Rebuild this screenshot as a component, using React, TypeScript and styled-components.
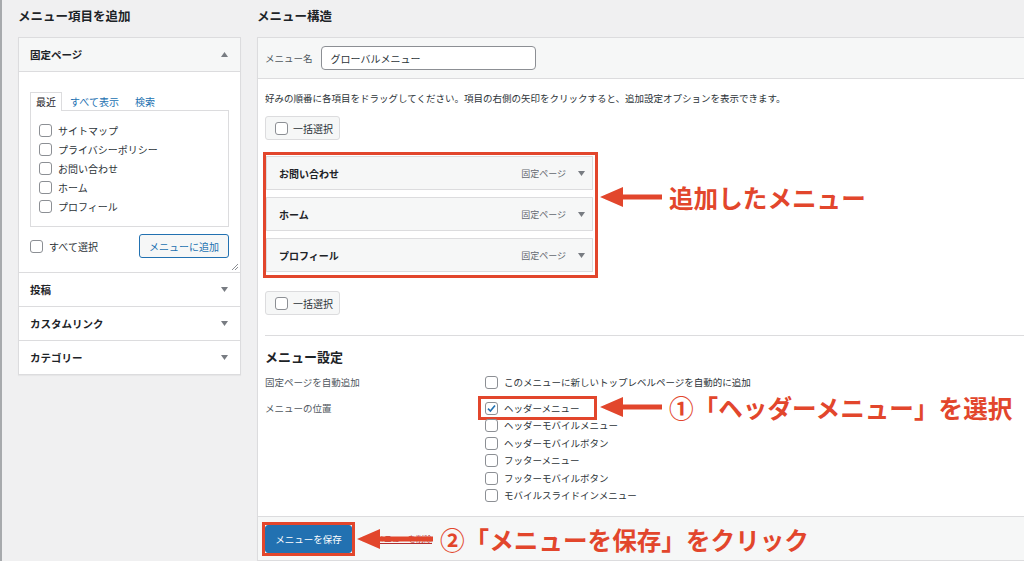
import React from "react";
import styled, { createGlobalStyle } from "styled-components";

const RED = "#e2462c";

const GlobalStyle = createGlobalStyle`
  html, body {
    margin: 0;
    padding: 0;
    background: #f0f0f1;
  }
  body {
    font-family: "Noto Sans CJK JP", "Noto Sans", sans-serif;
    color: #1d2327;
  }
`;

const Screen = styled.div`
  position: relative;
  width: 1024px;
  height: 561px;
  overflow: hidden;
  box-sizing: border-box;
  padding-left: 18px;
  box-shadow: inset 2px 0 0 #a7aaad;
  display: flex;
  gap: 16px;
`;

const Column = styled.div<{ $width?: number }>`
  display: flex;
  flex-direction: column;
  flex: ${(p) => (p.$width ? `0 0 ${p.$width}px` : "1 1 auto")};
  min-width: 0;
`;

const Heading = styled.h2`
  margin: 0;
  height: 37px;
  box-sizing: border-box;
  padding-top: 7px;
  font-size: 12.5px;
  line-height: 18px;
  font-weight: 700;
  color: #1d2327;
`;

const Panel = styled.div`
  background: #fff;
  border: 1px solid #dcdcde;
  box-shadow: 0 1px 1px rgba(0, 0, 0, 0.04);
`;

const SectionHead = styled.div<{ $open?: boolean }>`
  height: 33px;
  display: flex;
  align-items: center;
  justify-content: space-between;
  padding: 0 12px 0 11px;
  font-size: 10.5px;
  font-weight: 700;
  color: #1d2327;
  background: ${(p) => (p.$open ? "#f6f7f7" : "#fff")};
  border-bottom: ${(p) => (p.$open ? "1px solid #dcdcde" : "none")};
  border-top: ${(p) => (p.$open ? "none" : "1px solid #dcdcde")};
`;

const SectionBody = styled.div`
  padding: 20px 11px 0;
`;

const Tabs = styled.div`
  display: flex;
  position: relative;
  z-index: 1;
  margin-bottom: -1px;
`;

const Tab = styled.span<{ $active?: boolean }>`
  font-size: 10px;
  line-height: 18px;
  padding: 0 ${(p) => (p.$active ? 5 : 7)}px;
  color: ${(p) => (p.$active ? "#1d2327" : "#2271b1")};
  background: ${(p) => (p.$active ? "#fff" : "transparent")};
  border: 1px solid ${(p) => (p.$active ? "#dcdcde" : "transparent")};
  border-bottom: none;
`;

const ListBox = styled.div`
  border: 1px solid #dcdcde;
  padding: 10px 8px;
`;

const CheckRow = styled.label<{ $size?: number; $height?: number }>`
  display: flex;
  align-items: center;
  gap: 6px;
  height: ${(p) => p.$height ?? 19}px;
  font-size: ${(p) => p.$size ?? 10}px;
  color: #2c3338;
  white-space: nowrap;
`;

const Box = styled.span`
  width: 13px;
  height: 13px;
  box-sizing: border-box;
  flex: none;
  border: 1px solid #8c8f94;
  border-radius: 3px;
  background: #fff;
  display: inline-flex;
  align-items: center;
  justify-content: center;
`;

const FooterRow = styled.div`
  margin-top: 7px;
  height: 24px;
  display: flex;
  align-items: center;
  justify-content: space-between;
`;

const SecondaryButton = styled.button`
  height: 24px;
  padding: 0 9px;
  font-family: inherit;
  font-size: 10px;
  color: #2271b1;
  background: #f6f7f7;
  border: 1px solid #2271b1;
  border-radius: 3px;
`;

const ResizeRow = styled.div`
  height: 14px;
  display: flex;
  justify-content: flex-end;
  align-items: flex-end;
  margin-right: -9px;
  padding-bottom: 2px;
  box-sizing: border-box;
`;

const StructurePanel = styled(Panel)`
  flex: 1;
  display: flex;
  flex-direction: column;
  border-right: none;
`;

const NameBar = styled.div`
  height: 40px;
  display: flex;
  align-items: center;
  gap: 8px;
  padding: 0 7px;
  background: #f6f7f7;
  border-bottom: 1px solid #dcdcde;
`;

const Label = styled.span<{ $width?: number }>`
  font-size: 9.5px;
  color: #50575e;
  flex: none;
  width: ${(p) => (p.$width ? `${p.$width}px` : "auto")};
  white-space: nowrap;
`;

const NameInput = styled.div`
  width: 215px;
  height: 24px;
  box-sizing: border-box;
  border: 1px solid #8c8f94;
  border-radius: 4px;
  background: #fff;
  padding: 0 9px;
  display: flex;
  align-items: center;
  font-size: 10px;
  color: #2c3338;
`;

const Body = styled.div`
  flex: 1;
  padding-left: 7px;
  display: flex;
  flex-direction: column;
`;

const Description = styled.p`
  margin: 12px 0 0;
  font-size: 9.5px;
  line-height: 14px;
  color: #2c3338;
  white-space: nowrap;
`;

const BulkButton = styled.div<{ $top: number }>`
  margin-top: ${(p) => p.$top}px;
  width: 75px;
  height: 24px;
  box-sizing: border-box;
  display: flex;
  align-items: center;
  gap: 5px;
  padding-left: 9px;
  background: #f6f7f7;
  border: 1px solid #dcdcde;
  border-radius: 3px;
  font-size: 10px;
  color: #2c3338;
`;

const Highlight = styled.div`
  margin: 12px 0 0 -2px;
  width: 335px;
  box-sizing: border-box;
  border: 3px solid ${RED};
  padding: 1px 2px 3px 0;
  display: flex;
  flex-direction: column;
  gap: 7px;
`;

const MenuItem = styled.div`
  height: 34px;
  box-sizing: border-box;
  display: flex;
  align-items: center;
  padding: 0 7px 0 12px;
  background: #f6f7f7;
  border: 1px solid #dcdcde;
`;

const ItemTitle = styled.span`
  flex: 1;
  font-size: 10px;
  font-weight: 700;
  color: #1d2327;
`;

const ItemType = styled.span`
  font-size: 9px;
  color: #646970;
  margin-right: 12px;
`;

const Divider = styled.hr`
  margin: 20px 0 0;
  border: none;
  border-top: 1px solid #dcdcde;
`;

const SubHeading = styled.h3`
  margin: 12px 0 0;
  font-size: 13px;
  line-height: 18px;
  font-weight: 700;
  color: #1d2327;
`;

const SettingRow = styled.div<{ $top: number }>`
  display: flex;
  align-items: flex-start;
  margin-top: ${(p) => p.$top}px;
  line-height: 17.5px;
`;

const Options = styled.div`
  display: flex;
  flex-direction: column;
`;

const Marked = styled.div<{ $on?: boolean }>`
  position: relative;
  &::after {
    content: "";
    display: ${(p) => (p.$on ? "block" : "none")};
    position: absolute;
    top: -4px;
    left: -7px;
    width: 119px;
    height: 24px;
    box-sizing: border-box;
    border: 3px solid ${RED};
  }
`;

const Footer = styled.div`
  height: 43px;
  display: flex;
  align-items: center;
  padding: 0 7px;
  background: #f6f7f7;
  border-top: 1px solid #dcdcde;
`;

const SaveButton = styled.button`
  position: relative;
  width: 87px;
  height: 28px;
  font-family: inherit;
  font-size: 9.5px;
  color: #fff;
  background: #2271b1;
  border: 1px solid #2271b1;
  border-radius: 3px;
  &::after {
    content: "";
    position: absolute;
    inset: -4px;
    border: 3px solid ${RED};
  }
`;

const DeleteLink = styled.a`
  margin-left: 24px;
  font-size: 8px;
  color: #b32d2e;
  text-decoration: underline;
`;

const Callout = styled.div<{ $x: number; $y: number }>`
  position: absolute;
  left: ${(p) => p.$x}px;
  top: ${(p) => p.$y - 15}px;
  height: 30px;
  display: flex;
  align-items: center;
  gap: 7px;
  z-index: 5;
`;

const CalloutText = styled.span`
  font-size: 24.6px;
  font-weight: 700;
  color: ${RED};
  white-space: nowrap;
  line-height: 30px;
`;

const Triangle = ({ up }: { up?: boolean }) => (
  <svg width="7" height="5" viewBox="0 0 7 5">
    <path d={up ? "M0 5L3.5 0L7 5Z" : "M0 0L3.5 5L7 0Z"} fill="#787c82" />
  </svg>
);

const Check = ({ checked, label, size, height }: { checked?: boolean; label: string; size?: number; height?: number }) => (
  <CheckRow $size={size} $height={height}>
    <Box>
      {checked && (
        <svg width="11" height="11" viewBox="0 0 11 11">
          <path d="M2 5.6L4.4 8L9 2.5" fill="none" stroke="#2271b1" strokeWidth="1.6" />
        </svg>
      )}
    </Box>
    {label}
  </CheckRow>
);

const Arrow = ({ length }: { length: number }) => (
  <svg width={length} height="22" viewBox={`0 0 ${length} 22`}>
    <path d={`M0 11L23 1V8.5H${length}V13.5H23V21Z`} fill={RED} />
  </svg>
);

const pages = ["サイトマップ", "プライバシーポリシー", "お問い合わせ", "ホーム", "プロフィール"];
const menuItems = ["お問い合わせ", "ホーム", "プロフィール"];
const locations = [
  "ヘッダーメニュー",
  "ヘッダーモバイルメニュー",
  "ヘッダーモバイルボタン",
  "フッターメニュー",
  "フッターモバイルボタン",
  "モバイルスライドインメニュー",
];
const collapsed = ["投稿", "カスタムリンク", "カテゴリー"];

export default function App() {
  return (
    <>
      <GlobalStyle />
      <Screen>
        <Column $width={223}>
          <Heading>メニュー項目を追加</Heading>
          <Panel>
            <SectionHead $open>
              固定ページ
              <Triangle up />
            </SectionHead>
            <SectionBody>
              <Tabs>
                <Tab $active>最近</Tab>
                <Tab>すべて表示</Tab>
                <Tab>検索</Tab>
              </Tabs>
              <ListBox>
                {pages.map((p) => (
                  <Check key={p} label={p} />
                ))}
              </ListBox>
              <FooterRow>
                <Check label="すべて選択" />
                <SecondaryButton>メニューに追加</SecondaryButton>
              </FooterRow>
              <ResizeRow>
                <svg width="7" height="7" viewBox="0 0 7 7">
                  <path d="M1 7L7 1M4 7L7 4" stroke="#8c8f94" strokeWidth="1" />
                </svg>
              </ResizeRow>
            </SectionBody>
            {collapsed.map((c) => (
              <SectionHead key={c}>
                {c}
                <Triangle />
              </SectionHead>
            ))}
          </Panel>
        </Column>

        <Column>
          <Heading>メニュー構造</Heading>
          <StructurePanel>
            <NameBar>
              <Label>メニュー名</Label>
              <NameInput>グローバルメニュー</NameInput>
            </NameBar>
            <Body>
              <Description>
                好みの順番に各項目をドラッグしてください。項目の右側の矢印をクリックすると、追加設定オプションを表示できます。
              </Description>
              <BulkButton $top={11}>
                <Box />
                一括選択
              </BulkButton>
              <Highlight>
                {menuItems.map((m) => (
                  <MenuItem key={m}>
                    <ItemTitle>{m}</ItemTitle>
                    <ItemType>固定ページ</ItemType>
                    <Triangle />
                  </MenuItem>
                ))}
              </Highlight>
              <BulkButton $top={13}>
                <Box />
                一括選択
              </BulkButton>
              <Divider />
              <SubHeading>メニュー設定</SubHeading>
              <SettingRow $top={8}>
                <Label $width={220}>固定ページを自動追加</Label>
                <Check label="このメニューに新しいトップレベルページを自動的に追加" size={9.5} height={17.5} />
              </SettingRow>
              <SettingRow $top={8}>
                <Label $width={220}>メニューの位置</Label>
                <Options>
                  {locations.map((l, i) => (
                    <Marked key={l} $on={i === 0}>
                      <Check label={l} checked={i === 0} size={9.5} height={17.5} />
                    </Marked>
                  ))}
                </Options>
              </SettingRow>
            </Body>
            <Footer>
              <SaveButton>メニューを保存</SaveButton>
              <DeleteLink>メニューを削除</DeleteLink>
            </Footer>
          </StructurePanel>
        </Column>

        <Callout $x={600} $y={197}>
          <Arrow length={62} />
          <CalloutText>追加したメニュー</CalloutText>
        </Callout>
        <Callout $x={600} $y={407}>
          <Arrow length={62} />
          <CalloutText>①「ヘッダーメニュー」を選択</CalloutText>
        </Callout>
        <Callout $x={357} $y={539}>
          <Arrow length={76} />
          <CalloutText>②「メニューを保存」をクリック</CalloutText>
        </Callout>
      </Screen>
    </>
  );
}
